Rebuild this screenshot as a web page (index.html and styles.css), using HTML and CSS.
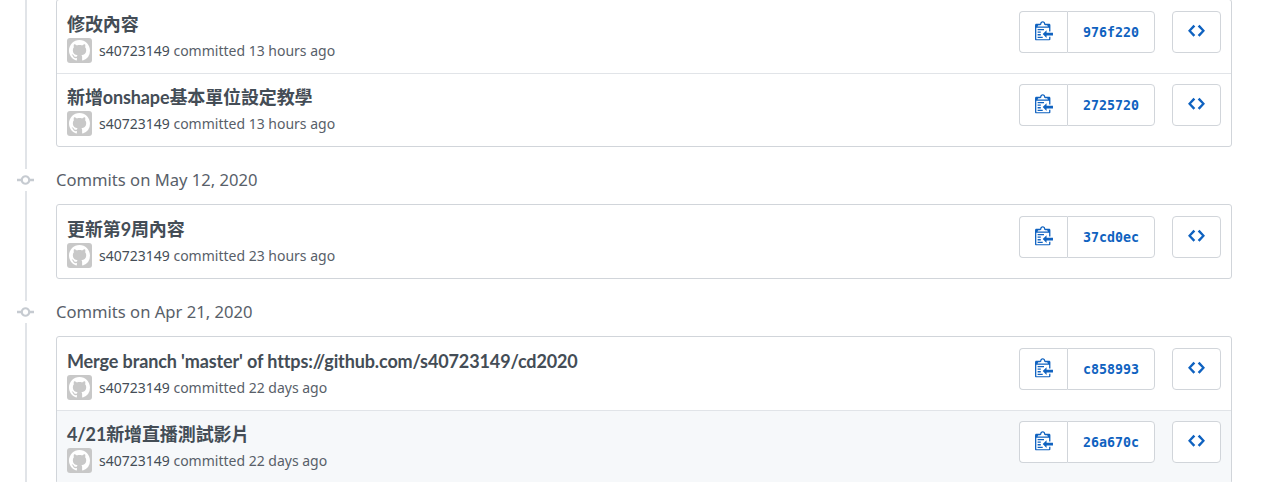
FILE: index.html
```html
<!DOCTYPE html>
<html lang="en">
<head>
    <meta charset="UTF-8">
    <meta name="viewport" content="width=device-width, initial-scale=1.0">
    <title>Commits - cd2020</title>
    <link rel="stylesheet" href="styles.css">
</head>
<body>

    <!-- Shared icons -->
    <svg class="icon-defs" aria-hidden="true">
        <symbol id="icon-clippy" viewBox="0 0 14 16"><path d="M2 13h4v1H2v-1zm5-6H2v1h5V7zm2 3V8l-3 3 3 3v-2h5v-2H9zM4.5 9H2v1h2.5V9zM2 12h2.5v-1H2v1zm9 1h1v2c-.02.28-.11.52-.3.7-.19.18-.42.28-.7.3H1c-.55 0-1-.45-1-1V4c0-.55.45-1 1-1h3c0-1.11.89-2 2-2 1.11 0 2 .89 2 2h3c.55 0 1 .45 1 1v5h-1V6H1v9h10v-2zM2 5h8c0-.55-.45-1-1-1H8c-.55 0-1-.45-1-1s-.45-1-1-1-1 .45-1 1-.45 1-1 1H3c-.55 0-1 .45-1 1z"/></symbol>
        <symbol id="icon-code" viewBox="0 0 14 16"><path d="M9.5 3L8 4.5 11.5 8 8 11.5 9.5 13 14 8 9.5 3zm-5 0L0 8l4.5 5L6 11.5 2.5 8 6 4.5 4.5 3z"/></symbol>
        <symbol id="icon-commit" viewBox="0 0 14 16"><path d="M10.86 7c-.45-1.72-2-3-3.86-3-1.86 0-3.41 1.28-3.86 3H0v2h3.14c.45 1.72 2 3 3.86 3 1.86 0 3.41-1.28 3.86-3H14V7h-3.14zM7 10.2c-1.22 0-2.2-.98-2.2-2.2 0-1.22.98-2.2 2.2-2.2 1.22 0 2.2.98 2.2 2.2 0 1.22-.98 2.2-2.2 2.2z"/></symbol>
        <symbol id="icon-mark" viewBox="0 0 16 16"><path d="M8 0C3.58 0 0 3.58 0 8c0 3.54 2.29 6.53 5.47 7.59.4.07.55-.17.55-.38 0-.19-.01-.82-.01-1.49-2.01.37-2.53-.49-2.69-.94-.09-.23-.48-.94-.82-1.13-.28-.15-.68-.52-.01-.53.63-.01 1.08.58 1.23.82.72 1.21 1.87.87 2.33.66.07-.52.28-.87.51-1.07-1.78-.2-3.64-.89-3.64-3.95 0-.87.31-1.59.82-2.15-.08-.2-.36-1.02.08-2.12 0 0 .67-.21 2.2.82.64-.18 1.32-.27 2-.27.68 0 1.36.09 2 .27 1.53-1.04 2.2-.82 2.2-.82.44 1.1.16 1.92.08 2.12.51.56.82 1.27.82 2.15 0 3.07-1.87 3.75-3.65 3.95.29.25.54.73.54 1.48 0 1.07-.01 1.93-.01 2.2 0 .21.15.46.55.38A8.013 8.013 0 0016 8c0-4.42-3.58-8-8-8z"/></symbol>
    </svg>

    <div class="timeline">

        <div class="commit-box">
            <div class="commit-row">
                <div class="commit-info">
                    <p class="commit-title">修改內容</p>
                    <div class="commit-meta">
                        <span class="avatar"><svg><use href="#icon-mark"/></svg></span>
                        <span><span class="author">s40723149</span> committed 13 hours ago</span>
                    </div>
                </div>
                <div class="commit-actions">
                    <div class="sha-group">
                        <button class="btn btn-copy"><svg class="icon-clippy"><use href="#icon-clippy"/></svg></button>
                        <a class="btn btn-sha">976f220</a>
                    </div>
                    <button class="btn btn-browse"><svg class="icon-code"><use href="#icon-code"/></svg></button>
                </div>
            </div>
            <div class="commit-row">
                <div class="commit-info">
                    <p class="commit-title">新增onshape基本單位設定教學</p>
                    <div class="commit-meta">
                        <span class="avatar"><svg><use href="#icon-mark"/></svg></span>
                        <span><span class="author">s40723149</span> committed 13 hours ago</span>
                    </div>
                </div>
                <div class="commit-actions">
                    <div class="sha-group">
                        <button class="btn btn-copy"><svg class="icon-clippy"><use href="#icon-clippy"/></svg></button>
                        <a class="btn btn-sha">2725720</a>
                    </div>
                    <button class="btn btn-browse"><svg class="icon-code"><use href="#icon-code"/></svg></button>
                </div>
            </div>
        </div>

        <h2 class="commit-date"><svg class="date-icon"><use href="#icon-commit"/></svg>Commits on May 12, 2020</h2>

        <div class="commit-box">
            <div class="commit-row">
                <div class="commit-info">
                    <p class="commit-title">更新第9周內容</p>
                    <div class="commit-meta">
                        <span class="avatar"><svg><use href="#icon-mark"/></svg></span>
                        <span><span class="author">s40723149</span> committed 23 hours ago</span>
                    </div>
                </div>
                <div class="commit-actions">
                    <div class="sha-group">
                        <button class="btn btn-copy"><svg class="icon-clippy"><use href="#icon-clippy"/></svg></button>
                        <a class="btn btn-sha">37cd0ec</a>
                    </div>
                    <button class="btn btn-browse"><svg class="icon-code"><use href="#icon-code"/></svg></button>
                </div>
            </div>
        </div>

        <h2 class="commit-date"><svg class="date-icon"><use href="#icon-commit"/></svg>Commits on Apr 21, 2020</h2>

        <div class="commit-box">
            <div class="commit-row">
                <div class="commit-info">
                    <p class="commit-title">Merge branch 'master' of https://github.com/s40723149/cd2020</p>
                    <div class="commit-meta">
                        <span class="avatar"><svg><use href="#icon-mark"/></svg></span>
                        <span><span class="author">s40723149</span> committed 22 days ago</span>
                    </div>
                </div>
                <div class="commit-actions">
                    <div class="sha-group">
                        <button class="btn btn-copy"><svg class="icon-clippy"><use href="#icon-clippy"/></svg></button>
                        <a class="btn btn-sha">c858993</a>
                    </div>
                    <button class="btn btn-browse"><svg class="icon-code"><use href="#icon-code"/></svg></button>
                </div>
            </div>
            <div class="commit-row hovered">
                <div class="commit-info">
                    <p class="commit-title">4/21新增直播測試影片</p>
                    <div class="commit-meta">
                        <span class="avatar"><svg><use href="#icon-mark"/></svg></span>
                        <span><span class="author">s40723149</span> committed 22 days ago</span>
                    </div>
                </div>
                <div class="commit-actions">
                    <div class="sha-group">
                        <button class="btn btn-copy"><svg class="icon-clippy"><use href="#icon-clippy"/></svg></button>
                        <a class="btn btn-sha">26a670c</a>
                    </div>
                    <button class="btn btn-browse"><svg class="icon-code"><use href="#icon-code"/></svg></button>
                </div>
            </div>
        </div>

    </div>

</body>
</html>
```

FILE: styles.css
```css
html, body { height: 482px; overflow: hidden; }
body { font-family: "Noto Sans", "Noto Sans CJK TC", sans-serif; background: white; margin: 0; color: #444d56; }
.icon-defs { display: none; }

.timeline {
    margin: -1px 34px 0 25px; padding-left: 29px;
    border-left: 2px solid #e1e4e8;
}

.commit-box { border: 1px solid #d1d5da; border-radius: 3px; background: white; }
.commit-row {
    display: flex; justify-content: space-between;
    height: 73px; box-sizing: border-box; padding: 12px 10px 0;
}
.commit-row + .commit-row { border-top: 1px solid #e1e4e8; padding-top: 11px; }
.commit-row.hovered { background: #f6f8fa; }

.commit-title {
    margin: 0; font-family: Lato, "Noto Sans CJK TC", sans-serif;
    font-size: 18px; line-height: 24px; font-weight: bold; letter-spacing: -0.12px;
}
.commit-meta { display: flex; align-items: center; margin-top: 2px; font-size: 14px; line-height: 25px; color: #586069; }
.author { color: #444d56; }
.avatar {
    display: flex; align-items: center; justify-content: center;
    width: 25px; height: 25px; margin-right: 7px;
    background: #c8c8c8; border-radius: 3px;
}
.avatar svg { width: 21px; height: 21px; fill: white; }

.commit-actions { display: flex; gap: 17px; margin-top: -1px; }
.sha-group { display: flex; }
.btn {
    display: flex; align-items: center; justify-content: center;
    height: 42px; box-sizing: border-box; padding: 0;
    background: white; border: 1px solid #d1d5da; border-radius: 4px;
    color: #0f62c0; fill: #0f62c0;
}
.btn-copy { width: 48px; border-radius: 4px 0 0 4px; border-right: 0; }
.btn-sha {
    width: 88px; border-radius: 0 4px 4px 0;
    font-family: "DejaVu Sans Mono", monospace; font-size: 13.3px; font-weight: bold;
}
.btn-browse { width: 49px; }
.icon-clippy { width: 18px; height: 20.5px; margin-top: -3px; }
.icon-code { width: 17px; height: 19.4px; margin-top: -3px; }

.commit-date {
    position: relative;
    margin: 0; padding: 22px 0 13px; font-size: 16.6px; line-height: 22px; font-weight: 400; color: #586069;
}
.date-icon {
    position: absolute; left: -39px; top: 22px;
    width: 17px; height: 22px; background: white; fill: #c6cbd1;
}
```
